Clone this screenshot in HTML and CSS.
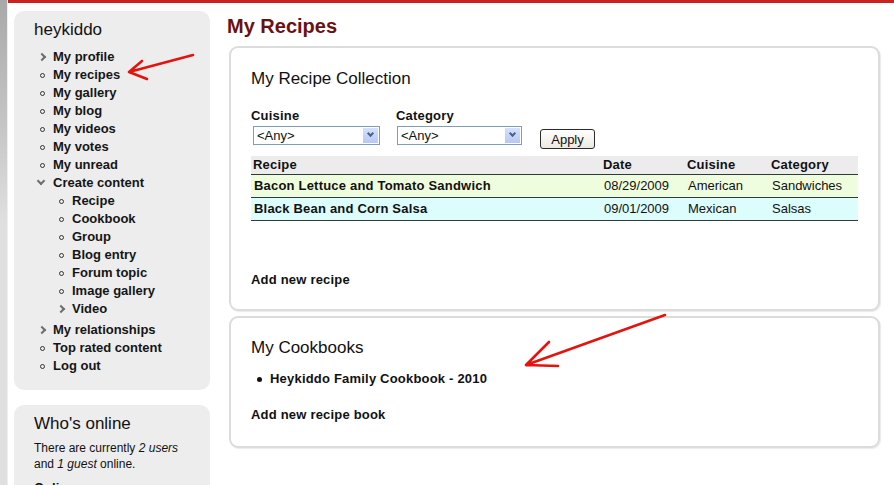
FILE: index.html
```html
<html>
<head>
<link rel="stylesheet" href="styles.css">
</head>
<body>
  <div class="edge"></div>
  <div class="page">
    <div class="sidebar">
      <div class="block">
        <h2 class="block-title">heykiddo</h2>
        <ul class="menu">
          <li class="collapsed">My profile</li>
          <li class="leaf">My recipes</li>
          <li class="leaf">My gallery</li>
          <li class="leaf">My blog</li>
          <li class="leaf">My videos</li>
          <li class="leaf">My votes</li>
          <li class="leaf">My unread</li>
          <li class="expanded">Create content
            <ul class="menu sub">
              <li class="leaf">Recipe</li>
              <li class="leaf">Cookbook</li>
              <li class="leaf">Group</li>
              <li class="leaf">Blog entry</li>
              <li class="leaf">Forum topic</li>
              <li class="leaf">Image gallery</li>
              <li class="collapsed">Video</li>
            </ul>
          </li>
          <li class="collapsed">My relationships</li>
          <li class="leaf">Top rated content</li>
          <li class="leaf">Log out</li>
        </ul>
      </div>
      <div class="block">
        <h2 class="block-title">Who's online</h2>
        <p class="online">There are currently <em>2 users</em> and <em>1 guest</em> online.</p>
        <h3 class="online-title">Online users</h3>
      </div>
    </div>

    <div class="main">
      <h1 class="page-title">My Recipes</h1>

      <div class="card">
        <h2 class="card-title">My Recipe Collection</h2>
        <div class="filters">
          <div class="filter cuisine">
            <label>Cuisine</label>
            <div class="select wide"><span>&lt;Any&gt;</span><i class="drop"></i></div>
          </div>
          <div class="filter">
            <label>Category</label>
            <div class="select"><span>&lt;Any&gt;</span><i class="drop"></i></div>
          </div>
          <button class="apply">Apply</button>
        </div>
        <table class="recipes">
          <tr>
            <th class="c-recipe">Recipe</th>
            <th class="c-date">Date</th>
            <th class="c-cuisine">Cuisine</th>
            <th>Category</th>
          </tr>
          <tr class="odd">
            <td class="name">Bacon Lettuce and Tomato Sandwich</td>
            <td>08/29/2009</td>
            <td>American</td>
            <td>Sandwiches</td>
          </tr>
          <tr class="even">
            <td class="name">Black Bean and Corn Salsa</td>
            <td>09/01/2009</td>
            <td>Mexican</td>
            <td>Salsas</td>
          </tr>
        </table>
        <div class="add-link first">Add new recipe</div>
      </div>

      <div class="card books">
        <h2 class="card-title">My Cookbooks</h2>
        <ul class="book-list">
          <li>Heykiddo Family Cookbook - 2010</li>
        </ul>
        <div class="add-link">Add new recipe book</div>
      </div>
    </div>
  </div>

  <!-- hand drawn red arrows on top of the screenshot -->
  <svg class="marks" width="894" height="485" viewBox="0 0 894 485">
    <g fill="none" stroke="#e3140e" stroke-width="2.6" stroke-linecap="round" stroke-linejoin="round">
      <path d="M193 55 L129 72 M129 72 L142 61 M129 72 L147 79"/>
      <path d="M665 315 L526 365 M526 365 L549 342 M526 365 L558 366"/>
    </g>
  </svg>
</body>
</html>
```

FILE: styles.css
```css
body {
    margin: 0;
    display: flex;
    height: 485px;
    overflow: hidden;
    font-family: "Liberation Sans", Arial, sans-serif;
    color: #111;
    background: #fff;
}
.edge {
    width: 7px;
    flex: none;
    background: linear-gradient(#a9a9a9, #c4c4c4 120px, #dfdfdf 220px);
    border-right: 1px solid #eee;
}
.page {
    flex: 1;
    display: flex;
    border-top: 3px solid #c9231e;
    padding: 8px 14px 0 6px;
}

/* sidebar */
.sidebar {
    width: 196px;
    flex: none;
}
.block {
    background: #ededed;
    border-radius: 10px;
    padding: 9px 10px 15px 20px;
}
.block + .block {
    margin-top: 15px;
}
.block-title {
    margin: 0;
    font-size: 17px;
    line-height: 20px;
    font-weight: normal;
    color: #111;
}
.menu {
    list-style: none;
    margin: 8px 0 0;
    padding: 0 0 0 19px;
}
.menu li {
    position: relative;
    font-size: 13px;
    font-weight: bold;
    line-height: 18px;
    color: #151515;
}
.menu li::before {
    content: "";
    position: absolute;
}
.menu li.leaf::before {
    left: -13px;
    top: 7px;
    width: 3px;
    height: 3px;
    border: 1px solid #333;
    border-radius: 50%;
}
.menu li.collapsed::before {
    left: -14px;
    top: 6px;
    width: 4px;
    height: 4px;
    border-top: 2px solid #6e6e6e;
    border-right: 2px solid #6e6e6e;
    transform: rotate(45deg);
}
.menu li.expanded::before {
    left: -15px;
    top: 4px;
    width: 4px;
    height: 4px;
    border-right: 2px solid #6e6e6e;
    border-bottom: 2px solid #6e6e6e;
    transform: rotate(45deg);
}
.menu.sub {
    margin: 0 0 3px;
}
.online {
    margin: 6px 0 0;
    font-size: 12px;
    line-height: 16px;
}
.online-title {
    margin: 8px 0 0;
    font-size: 13px;
}

/* main column */
.main {
    flex: 1;
    margin-left: 17px;
}
.page-title {
    margin: 3px 0 8px;
    font-size: 20px;
    line-height: 24px;
    color: #6c1111;
}
.card {
    margin-left: 2px;
    background: #fff;
    border: 2px solid #dcdcdc;
    border-radius: 9px;
    box-shadow: 1px 1px 1px #eaeaea;
    padding: 21px 20px 21px;
}
.card.books {
    margin-top: 5px;
    padding: 20px 20px 23px;
}
.card-title {
    margin: 0;
    font-size: 17px;
    line-height: 20px;
    font-weight: normal;
}

.filters {
    display: flex;
    align-items: flex-start;
    margin-top: 19px;
}
.filter {
    display: flex;
    flex-direction: column;
}
.filter.cuisine {
    width: 145px;
}
.filter label {
    font-size: 13px;
    font-weight: bold;
    line-height: 16px;
    letter-spacing: 0.2px;
}
.select {
    position: relative;
    width: 123px;
    height: 17px;
    margin: 2px 0 0 1px;
    border: 1px solid #7f9db9;
    background: #fff;
    font-size: 13px;
    line-height: 17px;
}
.select.wide {
    width: 125px;
    margin-left: 2px;
}
.select span {
    padding-left: 3px;
}
.drop {
    position: absolute;
    right: 1px;
    top: 1px;
    width: 15px;
    height: 15px;
    background: linear-gradient(#d5e1fc, #b5c9f5);
}
.drop::after {
    content: "";
    position: absolute;
    left: 5px;
    top: 3px;
    width: 3px;
    height: 3px;
    border-right: 2px solid #4d6185;
    border-bottom: 2px solid #4d6185;
    transform: rotate(45deg);
}
.apply {
    margin: 21px 0 0 18px;
    width: 55px;
    height: 20px;
    padding: 0;
    border: 1px solid #2b2b2b;
    border-radius: 3px;
    background: linear-gradient(#fff, #ece9df);
    font-family: "Liberation Sans", Arial, sans-serif;
    font-size: 13px;
    color: #111;
}

.recipes {
    width: 607px;
    margin-top: 7px;
    border-collapse: collapse;
    font-size: 13px;
}
.recipes th {
    height: 18px;
    padding: 0 0 0 2px;
    text-align: left;
    background: #ececec;
    border-bottom: 1px solid #2f3a3a;
    letter-spacing: 0.2px;
}
.recipes td {
    height: 23px;
    padding: 0 0 0 3px;
    border-bottom: 1px solid #2f3a3a;
}
.recipes .c-recipe { width: 348px; }
.recipes .c-date,
.recipes .c-cuisine { width: 82px; }
.recipes td.name {
    font-weight: bold;
    letter-spacing: 0.2px;
}
.recipes tr.odd td { background: #effddf; }
.recipes tr.even td { background: #ddfcfc; }

.add-link {
    margin-top: 20px;
    font-size: 13px;
    font-weight: bold;
    line-height: 16px;
    letter-spacing: 0.2px;
}
.add-link.first {
    margin-top: 51px;
}
.book-list {
    list-style: none;
    margin: 13px 0 0;
    padding: 0 0 0 19px;
}
.book-list li {
    position: relative;
    font-size: 13px;
    font-weight: bold;
    line-height: 16px;
    letter-spacing: 0.2px;
}
.book-list li::before {
    content: "";
    position: absolute;
    left: -13px;
    top: 6px;
    width: 5px;
    height: 5px;
    border-radius: 50%;
    background: #111;
}

.marks {
    position: absolute;
    left: 0;
    top: 0;
    pointer-events: none;
}
```
